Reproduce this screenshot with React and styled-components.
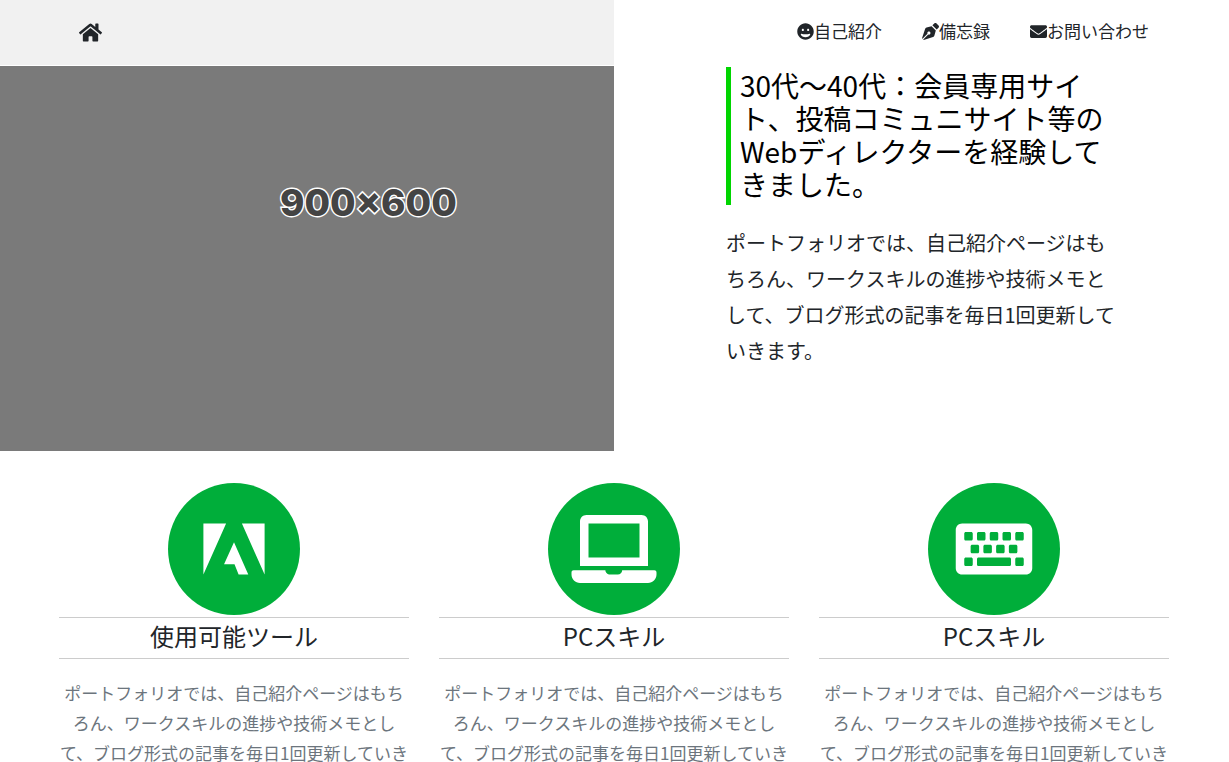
import React from "react";
import styled, { createGlobalStyle } from "styled-components";
import { FaHome, FaGrin, FaPenNib, FaEnvelope, FaLaptop, FaKeyboard } from "react-icons/fa";

const GlobalStyle = createGlobalStyle`
  *, *::before, *::after { box-sizing: border-box; }
  body {
    margin: 0;
    background: #fff;
    color: #212529;
    font-family: "Noto Sans CJK JP", sans-serif;
    font-size: 17px;
    overflow-x: hidden;
  }
  h1, h2, p { margin: 0; padding: 0; font-weight: 400; }
  a { color: inherit; text-decoration: none; }
`;

const Page = styled.div`
  padding-right: 1px;
`;

const Header = styled.header`
  display: grid;
  grid-template-columns: 1fr 1fr;
  height: 66px;
  border-bottom: 1px solid #fff;
`;

const Brand = styled.div`
  display: flex;
  align-items: center;
  padding-left: 79px;
  background: #f1f1f1;
`;

const HomeLink = styled.a`
  display: flex;
  svg { width: 23px; height: 23px; }
`;

const Nav = styled.nav`
  display: flex;
  align-items: center;
  justify-content: flex-end;
  gap: 40px;
  padding: 0 79px 3px 0;
`;

const NavLink = styled.a`
  display: flex;
  align-items: center;
  line-height: 24px;
  white-space: nowrap;
  svg { width: 17px; height: 17px; }
`;

const Hero = styled.section`
  display: grid;
  grid-template-columns: 1fr 1fr;
`;

const HeroImage = styled.div`
  height: 385px;
  overflow: hidden;
  background: #7a7a7a;
`;

const ImageLabel = styled.p`
  width: 120%;
  padding-top: 112px;
  text-align: center;
  font-family: Inter, sans-serif;
  font-size: 37px;
  font-weight: 800;
  line-height: 50px;
  color: #444;
  -webkit-text-stroke: 3px #fff;
  paint-order: stroke fill;
`;

const HeroText = styled.div`
  padding: 1px 109px 0 112px;
`;

const Lead = styled.h1`
  padding: 2px 11px 4px 9px;
  border-left: 5px solid #00d500;
  color: #000;
  font-size: 28px;
  line-height: 33px;
`;

const Intro = styled.p`
  margin-top: 20px;
  font-size: 20px;
  line-height: 36px;
`;

const Skills = styled.main`
  display: grid;
  grid-template-columns: repeat(3, 1fr);
  gap: 30px;
  max-width: 1110px;
  margin: 32px auto;
`;

const Skill = styled.article`
  display: flex;
  flex-direction: column;
  align-items: center;
  text-align: center;
`;

const Badge = styled.div`
  display: flex;
  align-items: center;
  justify-content: center;
  width: 132px;
  height: 132px;
  border-radius: 50%;
  background: #00ae3a;
  color: #fff;
  svg { width: 86px; height: 68px; }
`;

const SkillTitle = styled.h2`
  align-self: stretch;
  margin-top: 2px;
  padding-bottom: 4px;
  border: solid #ccc;
  border-width: 1px 0;
  font-size: 24px;
  line-height: 36px;
`;

const SkillText = styled.p`
  margin-top: 19px;
  color: #6c757d;
  font-size: 17px;
  line-height: 30px;
`;

const AdobeIcon = () => (
  <svg viewBox="0 0 512 512" fill="currentColor" aria-hidden="true">
    <path d="M315.5 64h170.9v384L315.5 64zm-119 0H25.6v384L196.5 64zM256 206.1L363.5 448h-73l-30.7-76.8h-78.7L256 206.1z" />
  </svg>
);

const links = [
  { icon: FaGrin, label: "自己紹介" },
  { icon: FaPenNib, label: "備忘録" },
  { icon: FaEnvelope, label: "お問い合わせ" },
];

const skills = [
  { icon: AdobeIcon, title: "使用可能ツール" },
  { icon: FaLaptop, title: "PCスキル" },
  { icon: FaKeyboard, title: "PCスキル" },
];

const description =
  "ポートフォリオでは、自己紹介ページはもちろん、ワークスキルの進捗や技術メモとして、ブログ形式の記事を毎日1回更新していきます。";

export default function App() {
  return (
    <Page>
      <GlobalStyle />
      <Header>
        <Brand>
          <HomeLink href="#" aria-label="ホーム">
            <FaHome />
          </HomeLink>
        </Brand>
        <Nav>
          {links.map(({ icon: Icon, label }) => (
            <NavLink href="#" key={label}>
              <Icon />
              {label}
            </NavLink>
          ))}
        </Nav>
      </Header>
      <Hero>
        <HeroImage>
          <ImageLabel>900×600</ImageLabel>
        </HeroImage>
        <HeroText>
          <Lead>30代〜40代：会員専用サイト、投稿コミュニサイト等のWebディレクターを経験してきました。</Lead>
          <Intro>{description}</Intro>
        </HeroText>
      </Hero>
      <Skills>
        {skills.map(({ icon: Icon, title }, i) => (
          <Skill key={i}>
            <Badge>
              <Icon />
            </Badge>
            <SkillTitle>{title}</SkillTitle>
            <SkillText>{description}</SkillText>
          </Skill>
        ))}
      </Skills>
    </Page>
  );
}
